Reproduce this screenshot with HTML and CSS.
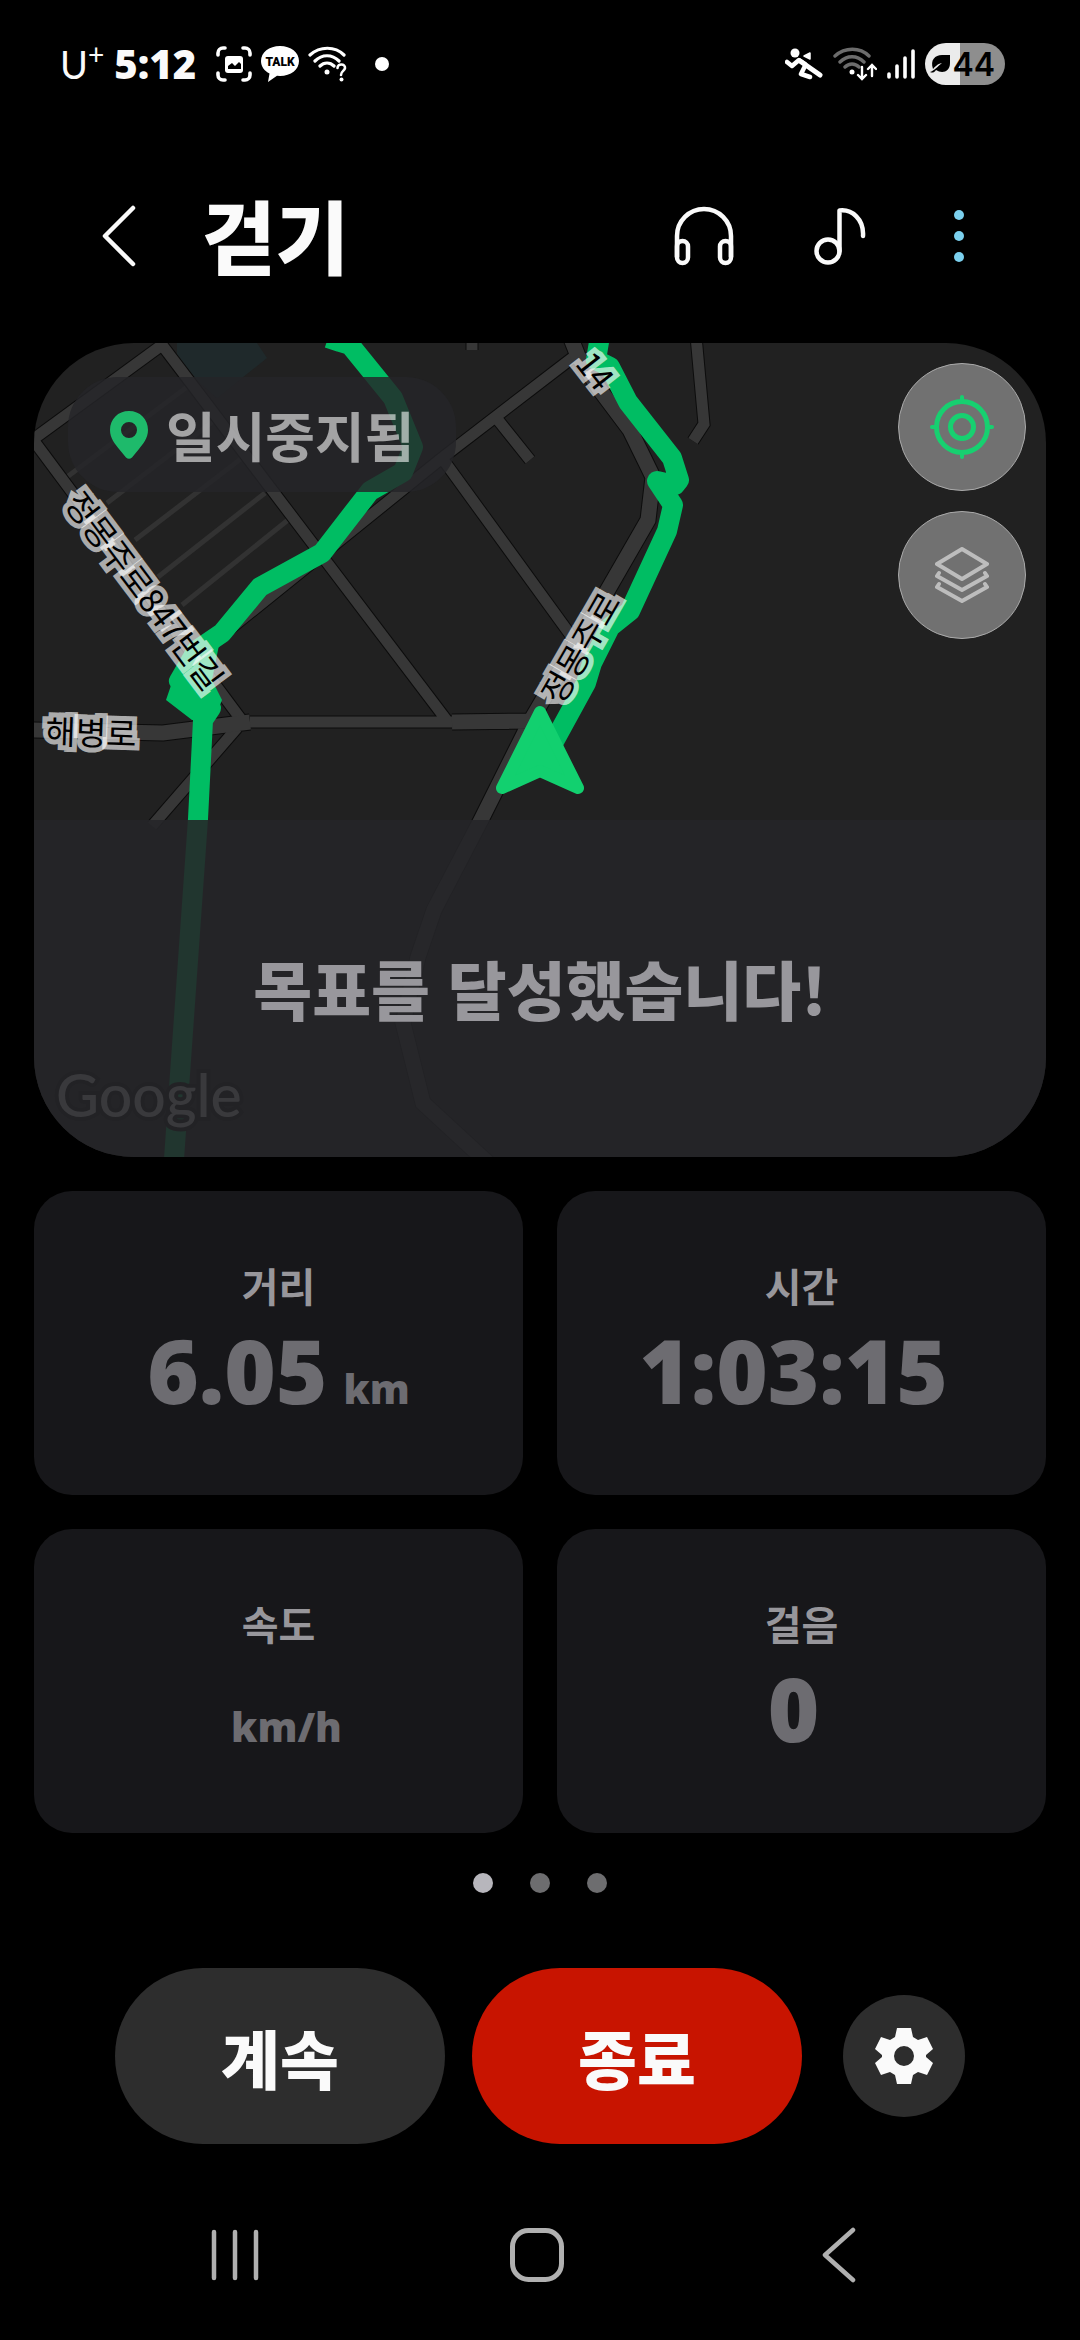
FILE: index.html
```html
<!DOCTYPE html>
<html lang="ko">
<head>
  <meta charset="UTF-8" />
  <meta name="viewport" content="width=device-width, initial-scale=1" />
  <title>걷기</title>
  <link rel="stylesheet" href="styles.css">
</head>
<body>
  <div class="status-bar">
    <div class="status-left">
      <span class="carrier">U<sup>+</sup></span>
      <span class="clock">5:12</span>
      <div class="status-icons">
        <svg width="36" height="36" viewBox="0 0 36 36" fill="none" stroke="#fff" stroke-width="3.6" stroke-linecap="round">
          <path d="M2 9V7a5 5 0 0 1 5-5h2M27 2h2a5 5 0 0 1 5 5v2M34 27v2a5 5 0 0 1-5 5h-2M9 34H7a5 5 0 0 1-5-5v-2" />
          <rect x="9" y="10" width="18" height="17" rx="3" fill="#fff" stroke="none" />
          <path d="M12 23v-3l4-3 3 3 4-4 2 2v5z" fill="#000" stroke="none" />
        </svg>
        <svg width="38" height="36" viewBox="0 0 38 36">
          <path d="M19 0C8 0 0 6.500 0 15c0 5.500 3.500 10 8.500 12.500L7 36l9-6.300 3 .3c11 0 19-6.500 19-15S30 0 19 0z" fill="#fff" />
          <text class="talk" x="19" y="20" text-anchor="middle">TALK</text>
        </svg>
        <svg width="40" height="36" viewBox="0 0 40 36" fill="none" stroke="#fff" stroke-width="3.200" stroke-linecap="round">
          <path d="M2 9C12 0 27 0 36 9M7 15c7-7 17-7 24 0M12 20c4-4 10-4 14 0" />
          <circle cx="19" cy="26" r="2.500" fill="#fff" stroke="none" />
          <path d="M29.500 22c0-5 8-4.500 7.500 0-.3 3-4 3-4 7" stroke-width="2.600" />
          <circle cx="33.500" cy="33.500" r="2" fill="#fff" stroke="none" />
        </svg>
        <span class="more-dot"></span>
      </div>
    </div>
    <div class="status-right">
      <svg width="38" height="32" viewBox="0 0 38 32" fill="none" stroke="#fff" stroke-linecap="round" stroke-linejoin="round">
        <circle cx="10" cy="5" r="4.500" fill="#fff" stroke="none" />
        <path d="M2 14l5 4 7-6 6 4M20 18l-4 8 9 3" stroke-width="4.500" />
        <path d="M15 13l20 14" stroke-width="5" />
        <path d="M19 8l6-3v6z" fill="#fff" stroke-width="1.500" />
      </svg>
      <svg width="44" height="34" viewBox="0 0 44 34" fill="none" stroke="#6c6c6c" stroke-width="3.400" stroke-linecap="round">
        <path d="M2 9C12 0 27 0 36 9M7 15c7-7 17-7 24 0M12 20c4-4 10-4 14 0" />
        <circle cx="19" cy="25" r="2.500" fill="#fff" stroke="none" />
        <path d="M29 20v11M25 28l4 4 4-4M39 29V19M35 22l4-4 4 4" stroke="#fff" stroke-width="2.400" />
      </svg>
      <svg width="28" height="30" viewBox="0 0 28 30" stroke="#fff" stroke-width="3.600" stroke-linecap="round">
        <path d="M2 25v3M10 17v11M18 9v19" />
        <path d="M26 2v26" />
      </svg>
      <div class="battery">
        <svg width="22" height="20" viewBox="0 0 22 20">
          <path d="M21 1v8c0 9-8 11-14 7-2 3-4 3-6 2 4-1 8-6 12-9-5 1-7 4-9 6C1 6 6 1 13 1z" fill="#000" />
        </svg>
        <span>44</span>
      </div>
    </div>
  </div>

  <header class="header">
    <button class="icon-btn back-btn" aria-label="뒤로">
      <svg width="34" height="64" viewBox="0 0 34 64" fill="none" stroke="#fafafa" stroke-width="4.500" stroke-linecap="round" stroke-linejoin="round">
        <path d="M31 4L3 32l28 28" />
      </svg>
    </button>
    <h1>걷기</h1>
    <div class="header-actions">
      <button class="icon-btn" aria-label="헤드폰">
        <svg width="60" height="60" viewBox="0 0 60 60" fill="none" stroke="#fafafa" stroke-width="4.500">
          <path d="M3 51V30a27 27 0 0 1 54 0v21" />
          <rect x="3" y="35" width="11" height="22" rx="5.500" />
          <rect x="46" y="35" width="11" height="22" rx="5.500" />
        </svg>
      </button>
      <button class="icon-btn" aria-label="음악">
        <svg width="52" height="58" viewBox="0 0 52 58" fill="none" stroke="#fafafa" stroke-width="4.500" stroke-linecap="round" stroke-linejoin="round">
          <circle cx="14" cy="44" r="11.500" />
          <path d="M25.500 44V3.500C38 2 50 12 49 29" />
        </svg>
      </button>
      <button class="icon-btn more-btn" aria-label="더보기">
        <svg width="10" height="54" viewBox="0 0 10 54" fill="#7bd0ee">
          <circle cx="5" cy="6" r="5" />
          <circle cx="5" cy="27" r="5" />
          <circle cx="5" cy="48" r="5" />
        </svg>
      </button>
    </div>
  </header>

  <main>
    <section class="map">
      <svg class="map-canvas" viewBox="34 343 1012 814" preserveAspectRatio="xMidYMid slice">
        <rect x="34" y="343" width="1012" height="814" fill="#212121" />
        <path d="M177 343h80l10 15-50 40-20-18-20-25z" fill="#1f292b" />

        <!-- side streets -->
        <path class="lane" d="M187 387L67 477M215 420L107 503M242 458L135 540M265 493L158 577M288 520L182 605" />

        <!-- road outlines -->
        <g class="road-edge">
          <path class="w12" d="M28 443L162 345L448 722M34 441L243 722M220 637L442 458L580 352M442 458L585 655M498 420L530 460M472 336v14M696 336l8 88-11 17M237 728L152 826M250 722H452" />
          <path class="w16" d="M30 730l133 3 87-11M452 722l88-1M570 336l8 20 22 34 30 40 23 47-5 43-42 73-75 127-50 100-47 90-16 47-15 66 20 80 65 60" />
        </g>
        <g class="road">
          <path class="w12" d="M28 443L162 345L448 722M34 441L243 722M220 637L442 458L580 352M442 458L585 655M498 420L530 460M472 336v14M696 336l8 88-11 17M237 728L152 826M250 722H452" />
          <path class="w16" d="M30 730l133 3 87-11M452 722l88-1M570 336l8 20 22 34 30 40 23 47-5 43-42 73-75 127-50 100-47 90-16 47-15 66 20 80 65 60" />
        </g>

        <!-- walked track -->
        <path class="track" d="M328 338l12 4 10 3 43 53 20 49-10 25-33 19-48 62-62 34-38 46-25 17-18 31 10 12 22 15-8 12-5 99-24 340" />
        <path d="M178 665l42-25-8 40 10 20-8 20h-22l-26-20z" fill="#00bd63" />
        <path class="track" d="M600 336l-4 24 14 7 18 35 44 56 7 22-4 5-18-4 16 24-6 26-37 80-20 16-18 36-6 20-35 64" />

        <path d="M540 712l38 76-38-17-38 17z" fill="#12d06f" stroke="#12d06f" stroke-width="12" stroke-linejoin="round" />

        <!-- street names -->
        <g class="street">
          <text transform="translate(144 591) rotate(53)" y="12">정몽주로847번길</text>
          <text transform="translate(581 648) rotate(-60)" y="12">정몽주로</text>
          <text transform="translate(595 371) rotate(52)" y="12">14</text>
          <text transform="translate(91 733) rotate(2)" y="12">해병로</text>
        </g>
        <text class="google" x="56" y="1117">Google</text>
      </svg>

      <div class="map-top">
        <div class="badge">
          <svg width="38" height="48" viewBox="0 0 38 48">
            <path fill-rule="evenodd" d="M19 0C8 0 0 8 0 19c0 8 5 14 9 19l7 8.500q3 2.500 6 0L29 38c4-5 9-11 9-19C38 8 30 0 19 0zm0 11a8 8 0 1 1 0 16 8 8 0 0 1 0-16z" fill="#1eba6b" />
          </svg>
          <span>일시중지됨</span>
        </div>
        <div class="map-tools">
          <button class="map-btn" aria-label="내 위치">
            <svg width="66" height="66" viewBox="0 0 66 66" fill="none" stroke="#17d070" stroke-width="5" stroke-linecap="round">
              <circle cx="33" cy="33" r="25.500" />
              <circle cx="33" cy="33" r="11.500" />
              <path d="M33 3v5M33 58v5M3 33h5M58 33h5" stroke-width="4" />
            </svg>
          </button>
          <button class="map-btn" aria-label="지도 유형">
            <svg width="54" height="56" viewBox="0 0 54 56" fill="none" stroke="#bdbdbd" stroke-width="4" stroke-linecap="round" stroke-linejoin="round">
              <path d="M27 2l25 15-25 15L2 17zM4 26l-2 3 25 14 25-14-2-3M4 37l-2 3 25 14 25-14-2-3" />
            </svg>
          </button>
        </div>
      </div>
      <p class="goal">목표를 달성했습니다!</p>
    </section>

    <section class="stats">
      <div class="stat">
        <p class="stat-name">거리</p>
        <p class="stat-value">6.05<span class="unit">km</span></p>
      </div>
      <div class="stat">
        <p class="stat-name">시간</p>
        <p class="stat-value">1:03:15<span class="unit"></span></p>
      </div>
      <div class="stat">
        <p class="stat-name">속도</p>
        <p class="stat-value"><span class="unit">km/h</span></p>
      </div>
      <div class="stat">
        <p class="stat-name">걸음</p>
        <p class="stat-value">0<span class="unit"></span></p>
      </div>
    </section>

    <div class="pager">
      <span class="dot active"></span>
      <span class="dot"></span>
      <span class="dot"></span>
    </div>

    <div class="controls">
      <button class="pill">계속</button>
      <button class="pill stop">종료</button>
      <button class="settings" aria-label="설정">
        <svg width="58" height="58" viewBox="0 0 58 58">
          <path fill-rule="evenodd" d="M22 1h14l2 9 5 3 9-3 6 12-7 6v2l7 6-6 12-9-3-5 3-2 9H22l-2-9-5-3-9 3-6-12 7-6v-2l-7-6 6-12 9 3 5-3zM29 19a10 10 0 1 0 0 20 10 10 0 0 0 0-20z" fill="#fafafa" />
        </svg>
      </button>
    </div>
  </main>

  <nav class="nav-bar">
    <button class="icon-btn" aria-label="최근 앱">
      <svg width="50" height="54" viewBox="0 0 50 54" stroke="#b0b0b0" stroke-width="4.500" stroke-linecap="round">
        <path d="M4 4v46" />
        <path d="M25 4v46" />
        <path d="M46 4v46" />
      </svg>
    </button>
    <button class="icon-btn" aria-label="홈">
      <svg width="54" height="54" viewBox="0 0 54 54" fill="none" stroke="#b0b0b0" stroke-width="5">
        <rect x="2.500" y="2.500" width="49" height="49" rx="16" />
      </svg>
    </button>
    <button class="icon-btn" aria-label="이전">
      <svg width="34" height="56" viewBox="0 0 34 56" fill="none" stroke="#b0b0b0" stroke-width="4.500" stroke-linecap="round" stroke-linejoin="round">
        <path d="M31 3L3 28l28 25" />
      </svg>
    </button>
  </nav>
</body>
</html>
```
FILE: styles.css
```css
:root {
  --bg: #000;
  --card: #17171a;
  --panel: 37, 37, 40;
  --label: #97969b;
  --value: #6d6c71;
  --button: #2d2d2d;
  --stop: #c81400;
  --green: #00bd63;
}

* {
  box-sizing: border-box;
}

body {
  margin: 0;
  min-height: 100vh;
  display: flex;
  flex-direction: column;
  background: var(--bg);
  color: #fafafa;
  font-family: "Noto Sans CJK KR", "Noto Sans", sans-serif;
}

p, h1 {
  margin: 0;
}

svg {
  display: block;
}

button {
  border: none;
  padding: 0;
  font-family: inherit;
  color: inherit;
  cursor: pointer;
}

.icon-btn {
  background: none;
}

/* status bar */
.status-bar {
  height: 128px;
  padding: 0 75px 0 60px;
  display: flex;
  align-items: center;
  justify-content: space-between;
}

.status-left, .status-right, .status-icons {
  display: flex;
  align-items: center;
}

.status-left {
  gap: 10px;
}

.carrier {
  font-family: Lato, sans-serif;
  font-size: 38px;
  font-weight: 400;
  line-height: 40px;
}

.carrier sup {
  font-size: 28px;
  line-height: 20px;
}

.clock {
  font-family: "Open Sans", sans-serif;
  font-size: 40px;
  font-weight: 800;
  line-height: 40px;
}

.status-icons {
  gap: 9px;
  margin-left: 10px;
}

.talk {
  font-family: Roboto, sans-serif;
  font-size: 12px;
  font-weight: 900;
}

.more-dot {
  width: 14px;
  height: 14px;
  margin-left: 18px;
  border-radius: 50%;
  background: #fff;
}

.status-right {
  gap: 10px;
}

.battery {
  height: 42px;
  padding: 0 10px 0 4px;
  display: flex;
  align-items: center;
  gap: 1px;
  border-radius: 21px;
  background: linear-gradient(90deg, #ebebeb 44%, #8e8e8e 44%);
  color: #000;
  font-family: Inter, sans-serif;
  font-size: 32px;
  font-weight: 600;
}

/* header */
.header {
  height: 215px;
  padding: 0 116px 0 102px;
  display: flex;
  align-items: center;
}

.header h1 {
  margin-left: 66px;
  padding-bottom: 6px;
  font-size: 80px;
  font-weight: 900;
  line-height: 100px;
}

.header-actions {
  margin-left: auto;
  display: flex;
  align-items: center;
  gap: 80px;
}

.more-btn {
  margin-left: 8px;
}

main {
  padding: 0 34px;
}

/* map */
.map {
  position: relative;
  aspect-ratio: 506 / 407;
  display: flex;
  flex-direction: column;
  justify-content: space-between;
  border-radius: 100px;
  overflow: hidden;
}

.map-canvas {
  position: absolute;
  inset: 0;
  width: 100%;
  height: 100%;
}

.lane {
  fill: none;
  stroke: #323232;
  stroke-width: 5;
}

.road, .road-edge {
  fill: none;
  stroke: #373737;
}

.road-edge {
  stroke: #0c0c0c;
}

.road .w12 {
  stroke-width: 11;
}

.road .w16 {
  stroke-width: 15;
}

.road-edge .w12 {
  stroke-width: 13;
}

.road-edge .w16 {
  stroke-width: 17;
}

.track {
  fill: none;
  stroke: var(--green);
  stroke-width: 20;
  stroke-linejoin: round;
}

.street text {
  font-size: 33px;
  font-weight: 400;
  text-anchor: middle;
  fill: #000;
  stroke: rgba(255, 255, 255, 0.65);
  stroke-width: 10px;
  stroke-linejoin: miter;
  paint-order: stroke;
}

.google {
  font-family: Lato, sans-serif;
  font-size: 59px;
  font-weight: 500;
  fill: #d8d8d8;
  stroke: #0c0c0c;
  stroke-width: 8px;
  paint-order: stroke;
}

.map-top {
  position: relative;
  padding: 20px 20px 0 34px;
  display: flex;
  align-items: flex-start;
  justify-content: space-between;
}

.badge {
  margin-top: 14px;
  height: 115px;
  padding: 0 42px;
  display: flex;
  align-items: center;
  gap: 18px;
  border-radius: 50px;
  background: rgba(var(--panel), 0.82);
  color: rgba(255, 255, 255, 0.58);
  font-size: 54px;
  font-weight: 700;
  line-height: 60px;
}

.map-tools {
  display: flex;
  flex-direction: column;
  gap: 20px;
}

.map-btn {
  width: 128px;
  height: 128px;
  display: flex;
  align-items: center;
  justify-content: center;
  border: 1px solid #aaa;
  border-radius: 50%;
  background: #717171;
}

.goal {
  position: relative;
  padding: 127px 20px 130px;
  background: rgba(var(--panel), 0.89);
  color: #98979c;
  font-size: 64px;
  font-weight: 900;
  line-height: 80px;
  text-align: center;
}

/* stats */
.stats {
  margin-top: 34px;
  display: grid;
  grid-template-columns: 1fr 1fr;
  gap: 34px;
}

.stat {
  padding: 64px 20px 70px;
  border-radius: 38px;
  background: var(--card);
  text-align: center;
}

.stat-name {
  color: var(--label);
  font-size: 40px;
  font-weight: 700;
  line-height: 60px;
}

.stat-value {
  color: var(--value);
  font-family: "Open Sans", sans-serif;
  font-size: 88px;
  font-weight: 800;
  line-height: 110px;
}

.unit {
  margin-left: 16px;
  font-size: 40px;
  line-height: 40px;
}

.pager {
  padding: 40px 0 75px;
  display: flex;
  justify-content: center;
  gap: 37px;
}

.dot {
  width: 20px;
  height: 20px;
  border-radius: 50%;
  background: #6d6d6f;
}

.dot.active {
  background: #b7b6bc;
}

/* buttons */
.controls {
  display: flex;
  align-items: center;
  justify-content: center;
  gap: 27px;
}

.pill {
  width: 330px;
  height: 176px;
  border-radius: 88px;
  background: var(--button);
  font-size: 64px;
  font-weight: 900;
  line-height: 80px;
}

.pill.stop {
  background: var(--stop);
}

.settings {
  width: 122px;
  height: 122px;
  margin-left: 14px;
  display: flex;
  align-items: center;
  justify-content: center;
  border-radius: 50%;
  background: var(--button);
}

.nav-bar {
  height: 170px;
  margin-top: auto;
  padding: 0 90px 0 84px;
  display: grid;
  grid-template-columns: repeat(3, 1fr);
  place-items: center;
}
```
